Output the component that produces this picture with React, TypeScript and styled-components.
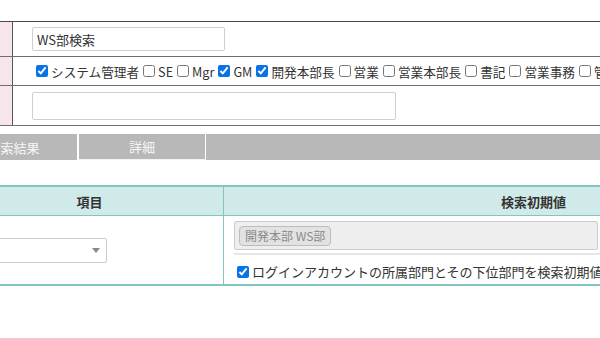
import * as React from 'react';
import styled, { createGlobalStyle } from 'styled-components';

const GlobalStyle = createGlobalStyle`
  html, body {
    margin: 0;
    padding: 0;
    background: #fff;
    overflow: hidden;
  }
  body {
    font-family: "Noto Sans CJK JP", "Noto Sans", sans-serif;
    font-size: 13px;
    color: #333;
  }
`;

const roles: { name: string; checked: boolean }[] = [
  { name: 'システム管理者', checked: true },
  { name: 'SE', checked: false },
  { name: 'Mgr', checked: false },
  { name: 'GM', checked: true },
  { name: '開発本部長', checked: true },
  { name: '営業', checked: false },
  { name: '営業本部長', checked: false },
  { name: '書記', checked: false },
  { name: '営業事務', checked: false },
  { name: '管理者', checked: false },
];

export default function App() {
  return (
    <Page>
      <GlobalStyle />
      <FormTable>
        <FormRow height={35}>
          <Label />
          <Value>
            <TextInput width={193} height={24} defaultValue="WS部検索" />
          </Value>
        </FormRow>
        <FormRow height={29}>
          <Label />
          <Value>
            <CheckList>
              {roles.map((r) => (
                <CheckItem key={r.name}>
                  <Check type="checkbox" defaultChecked={r.checked} />
                  {r.name}
                </CheckItem>
              ))}
            </CheckList>
          </Value>
        </FormRow>
        <FormRow height={40}>
          <Label />
          <Value>
            <TextInput width={364} height={28} defaultValue="" />
          </Value>
        </FormRow>
      </FormTable>

      <TabBar>
        <Tab>検索結果</Tab>
        <Tab active>詳細</Tab>
      </TabBar>

      <SettingTable>
        <HeadCell>項目</HeadCell>
        <HeadCell>検索初期値</HeadCell>
        <BodyCell>
          <Select>
            <Arrow />
          </Select>
        </BodyCell>
        <BodyCell right>
          <TagBox>
            <Chip>開発本部 WS部</Chip>
          </TagBox>
          <Divider />
          <CheckLine>
            <Check type="checkbox" defaultChecked />
            ログインアカウントの所属部門とその下位部門を検索初期値とする
          </CheckLine>
        </BodyCell>
      </SettingTable>
    </Page>
  );
}

const Page = styled.div`
  width: 600px;
  height: 338px;
  overflow: hidden;
  padding-top: 21px;
  box-sizing: border-box;
`;

const FormTable = styled.div`
  border-top: 1px solid #4a4a4a;
  width: 900px;
`;

const FormRow = styled.div<{ height: number }>`
  display: grid;
  grid-template-columns: 13px 1fr;
  height: ${(p) => p.height}px;
  border-bottom: 1px solid #6e6e6e;
  box-sizing: border-box;
`;

const Label = styled.div`
  background: #f6e5ea;
  border-right: 1px solid #555;
`;

const Value = styled.div`
  display: flex;
  align-items: center;
  padding-left: 19px;
  white-space: nowrap;
`;

const TextInput = styled.input<{ width: number; height: number }>`
  width: ${(p) => p.width}px;
  height: ${(p) => p.height}px;
  box-sizing: border-box;
  border: 1px solid #cfcfcf;
  border-radius: 2px;
  padding: 0 4px;
  font: inherit;
  font-size: 13px;
  color: #333;
  outline: none;
`;

const CheckList = styled.div`
  display: flex;
  align-items: center;
  gap: 1px;
  padding-left: 1px;
  font-size: 12.65px;
`;

const CheckItem = styled.label`
  display: inline-flex;
  align-items: center;
  color: #333;
`;

const Check = styled.input`
  width: 12px;
  height: 12px;
  margin: 0 3px 0 3px;
  accent-color: #0a72e8;
`;

const TabBar = styled.div`
  display: flex;
  margin-top: 8px;
  margin-left: -50px;
  width: 650px;
  height: 26px;
  background: #b8b8b8;
`;

const Tab = styled.div<{ active?: boolean }>`
  width: 128px;
  box-sizing: border-box;
  display: flex;
  align-items: center;
  justify-content: center;
  color: #f6f6f6;
  font-size: 13px;
  border-right: 1px solid #fff;
  ${(p) => (p.active ? 'border-left: 1px solid #fff; border-bottom: 1px solid #f4f4f4;' : '')}
`;

const SettingTable = styled.div`
  display: grid;
  grid-template-columns: 267px 620px;
  margin-top: 25px;
  margin-left: -44px;
  border-top: 2px solid #82c6c2;
  border-bottom: 2px solid #82c6c2;
  width: 887px;
`;

const HeadCell = styled.div`
  height: 28px;
  background: #d0e9e9;
  display: flex;
  align-items: center;
  justify-content: center;
  font-weight: bold;
  color: #333;
  border-bottom: 1px solid #82c6c2;
  & + & {
    border-left: 1px solid #82c6c2;
  }
`;

const BodyCell = styled.div<{ right?: boolean }>`
  height: 68px;
  box-sizing: border-box;
  display: flex;
  flex-direction: column;
  justify-content: ${(p) => (p.right ? 'flex-start' : 'center')};
  padding: ${(p) => (p.right ? '5px 0 0 10px' : '0 0 0 11px')};
  ${(p) => (p.right ? 'border-left: 1px solid #82c6c2;' : '')}
`;

const Select = styled.div`
  width: 140px;
  height: 25px;
  box-sizing: border-box;
  border: 1px solid #cccccc;
  border-radius: 2px;
  background: #fff;
  display: flex;
  align-items: center;
  justify-content: flex-end;
  padding-right: 6px;
`;

const Arrow = styled.span`
  width: 0;
  height: 0;
  border-left: 4px solid transparent;
  border-right: 4px solid transparent;
  border-top: 5px solid #888;
`;

const TagBox = styled.div`
  width: 364px;
  height: 29px;
  box-sizing: border-box;
  background: #eeeeee;
  border: 1px solid #cccccc;
  border-radius: 2px;
  display: flex;
  align-items: center;
  padding-left: 4px;
`;

const Chip = styled.span`
  height: 20px;
  box-sizing: border-box;
  display: inline-flex;
  align-items: center;
  padding: 0 5px;
  background: #e2e2e2;
  border: 1px solid #bdbdbd;
  border-radius: 4px;
  color: #8a8a8a;
  font-size: 12px;
`;

const Divider = styled.div`
  height: 2px;
  background: #e6e6e6;
  margin-top: 3px;
`;

const CheckLine = styled.label`
  display: flex;
  align-items: center;
  margin-top: 7px;
  white-space: nowrap;
  color: #333;
`;
